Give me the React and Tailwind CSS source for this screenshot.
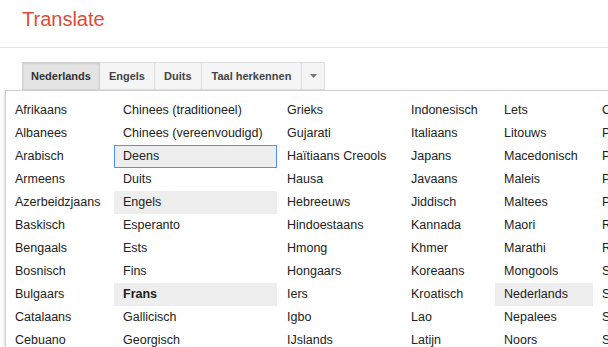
import React from "react";

const cols = [
  { w: "w-[108px]", items: ["Afrikaans","Albanees","Arabisch","Armeens","Azerbeidzjaans","Baskisch","Bengaals","Bosnisch","Bulgaars","Catalaans","Cebuano"] },
  { w: "w-[164px]", items: ["Chinees (traditioneel)","Chinees (vereenvoudigd)","Deens","Duits","Engels","Esperanto","Ests","Fins","Frans","Gallicisch","Georgisch"] },
  { w: "w-[124px]", items: ["Grieks","Gujarati","Haïtiaans Creools","Hausa","Hebreeuws","Hindoestaans","Hmong","Hongaars","Iers","Igbo","IJslands"] },
  { w: "w-[93px]", items: ["Indonesisch","Italiaans","Japans","Javaans","Jiddisch","Kannada","Khmer","Koreaans","Kroatisch","Lao","Latijn"] },
  { w: "w-[98px]", items: ["Lets","Litouws","Macedonisch","Maleis","Maltees","Maori","Marathi","Mongools","Nederlands","Nepalees","Noors"] },
  { w: "w-[120px]", items: ["Oekraïens","Perzisch","Pools","Portugees","Punjabi","Roemeens","Russisch","Servisch","Sesotho","Singalees","Slowaaks"] },
];

function Item({ label, ci }) {
  const focused = ci === 1 && label === "Deens";
  const hl = (ci === 1 && (label === "Engels" || label === "Frans")) || (ci === 4 && label === "Nederlands");
  const bold = ci === 1 && label === "Frans";
  let cls = "h-[23px] flex items-center pl-[8px] border whitespace-nowrap ";
  if (ci === 1) cls += "mr-px ";
  if (focused) cls += "border-[#4d90fe] bg-[#eeeeee] ";
  else if (hl) cls += "border-transparent bg-[#eeeeee] ";
  else cls += "border-transparent ";
  if (bold) cls += "font-bold ";
  return <div className={cls}>{label}</div>;
}

export default function App() {
  return (
    <div className="w-[608px] h-[347px] overflow-hidden bg-white text-[#222] [font-family:'Liberation_Sans',Arial,sans-serif]">
      <div className="h-[48px] border-b border-[#e5e5e5] pl-[22px] pt-[7px]">
        <div className="text-[20px] leading-[24px] text-[#dd4b39]">Translate</div>
      </div>
      <div className="pl-[22px] pt-[14px] flex">
        <div className="flex h-[28px] text-[11px] font-bold text-[#444]">
          <div className="px-[8px] flex items-center border border-[#d0d0d0] bg-[#e4e4e4] shadow-[inset_0_1px_2px_rgba(0,0,0,0.1)] text-[#333]">Nederlands</div>
          <div className="px-[9px] flex items-center border border-l-0 border-[#dcdcdc] bg-[#f5f5f5]">Engels</div>
          <div className="px-[9px] flex items-center border border-l-0 border-[#dcdcdc] bg-[#f5f5f5]">Duits</div>
          <div className="px-[10px] flex items-center border border-l-0 border-[#dcdcdc] bg-[#f5f5f5]">Taal herkennen</div>
          <div className="w-[23px] flex items-center justify-center border border-l-0 border-[#dcdcdc] bg-[#f5f5f5]">
            <svg width="7" height="4" viewBox="0 0 7 4"><path d="M0 0h7L3.5 4z" fill="#777" /></svg>
          </div>
        </div>
      </div>
      <div className="ml-[5px] border-l border-t border-[#cfcfcf] bg-white shadow-[0_2px_4px_rgba(0,0,0,0.2)] pt-[8px] flex text-[12.5px] w-[700px]">
        {cols.map((c, ci) => (
          <div key={ci} className={"flex flex-col shrink-0 " + c.w}>
            {c.items.map((l) => (
              <Item key={l} label={l} ci={ci} />
            ))}
          </div>
        ))}
      </div>
    </div>
  );
}
